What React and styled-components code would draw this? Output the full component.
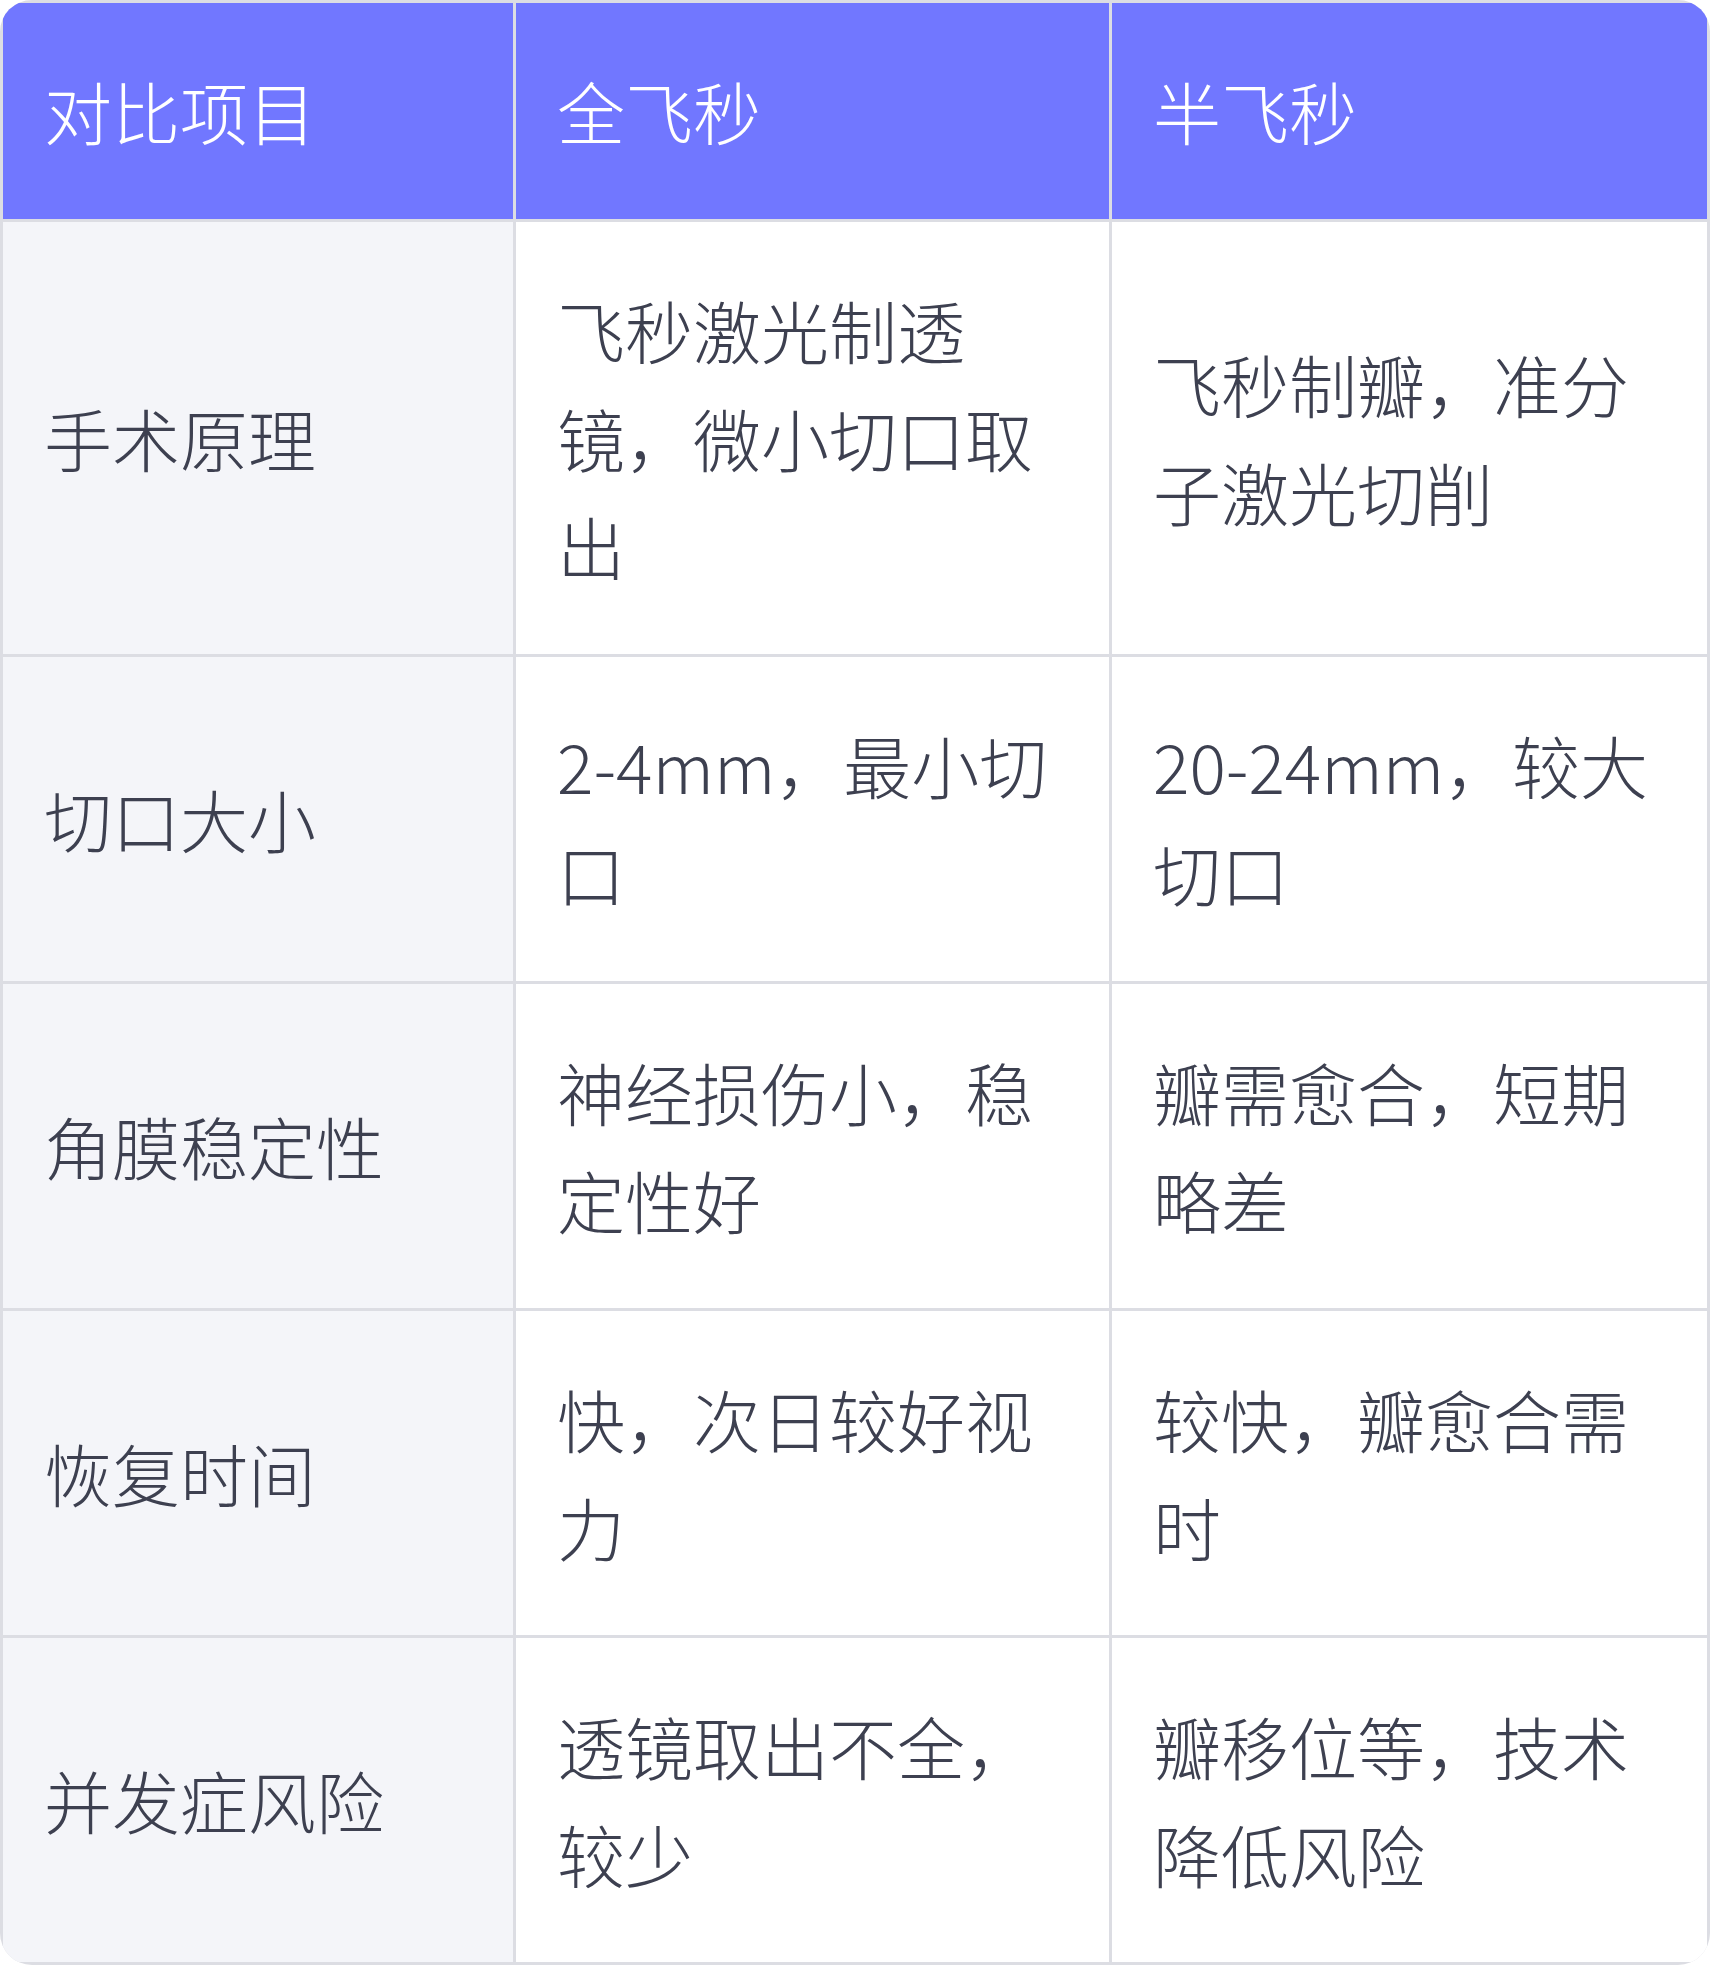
import React from 'react'
import styled, { createGlobalStyle } from 'styled-components'

const GlobalStyle = createGlobalStyle`
  html, body {
    margin: 0;
    padding: 0;
    background: #ffffff;
  }
  body {
    font-family: "Noto Sans CJK SC", "Noto Sans", sans-serif;
  }
`

const columns = ['对比项目', '全飞秒', '半飞秒']

const rows = [
  ['手术原理', '飞秒激光制透镜，微小切口取出', '飞秒制瓣，准分子激光切削'],
  ['切口大小', '2-4mm，最小切口', '20-24mm，较大切口'],
  ['角膜稳定性', '神经损伤小，稳定性好', '瓣需愈合，短期略差'],
  ['恢复时间', '快，次日较好视力', '较快，瓣愈合需时'],
  ['并发症风险', '透镜取出不全，较少', '瓣移位等，技术降低风险'],
]

const CompareTable = () => (
  <Table>
    {columns.map((title) => (
      <HeadCell key={title}>{title}</HeadCell>
    ))}
    {rows.map((row) =>
      row.map((text, i) => (
        <Cell key={row[0] + i} $label={i === 0}>
          {text}
        </Cell>
      ))
    )}
  </Table>
)

const App = () => (
  <>
    <GlobalStyle />
    <CompareTable />
  </>
)

const Table = styled.div`
  display: grid;
  grid-template-columns: 510px 593px 1fr;
  gap: 3px;
  padding: 3px;
  width: 1710px;
  box-sizing: border-box;
  background: #dcdde3;
  border-radius: 32px;
  overflow: hidden;
`

const BaseCell = styled.div`
  display: flex;
  align-items: center;
  padding: 54px 40px 54px 41px;
  font-size: 68px;
  line-height: 108px;
  font-weight: 200;
  word-break: break-all;
`

const HeadCell = styled(BaseCell)`
  background: #7177ff;
  color: #ffffff;
`

const Cell = styled(BaseCell)`
  background: ${(p) => (p.$label ? '#f4f5f9' : '#ffffff')};
  color: #3d4050;
`

export default App
